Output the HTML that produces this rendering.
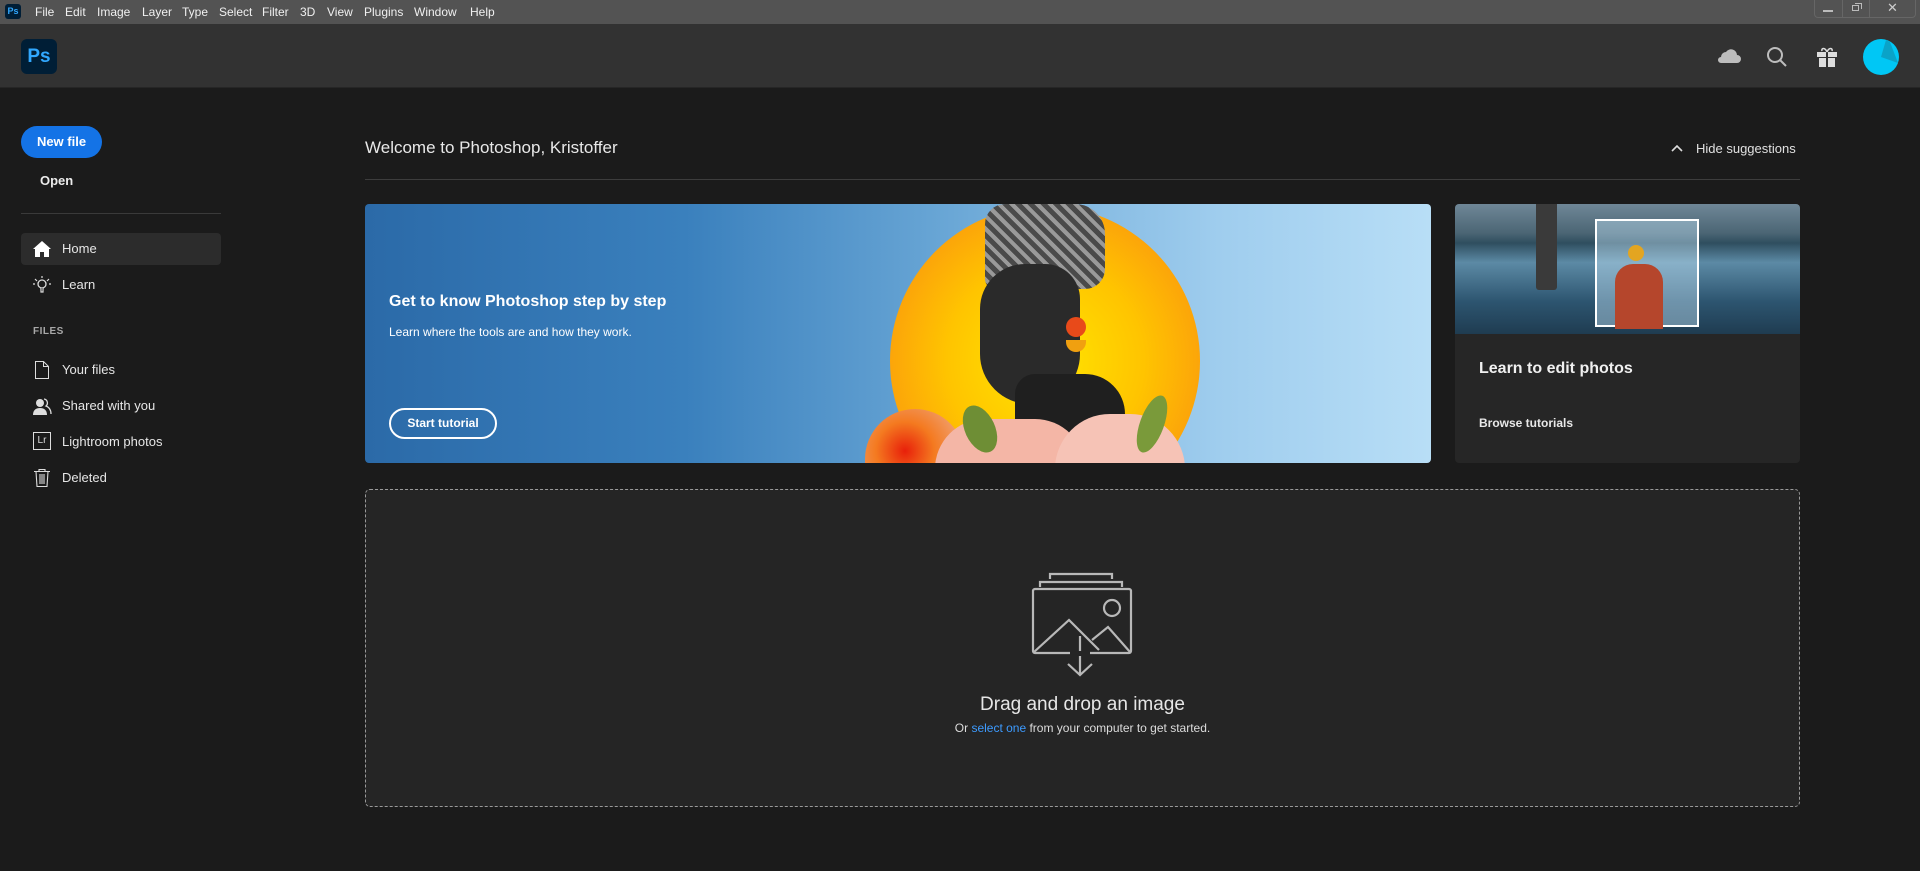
<!DOCTYPE html>
<html><head><meta charset="utf-8"><style>
*{margin:0;padding:0;box-sizing:border-box}
body{width:1920px;height:871px;background:#1b1b1b;font-family:"Liberation Sans",sans-serif;color:#e8e8e8;position:relative;overflow:hidden}
.a{position:absolute}
.menu{left:0;top:0;width:1920px;height:24px;background:#535353;font-size:12px;color:#f0f0f0}
.menu span{position:absolute;top:5px}
.hdr{left:0;top:24px;width:1920px;height:64px;background:#323232;border-bottom:1px solid #262626}
.nav{font-size:13px;color:#e6e6e6}
</style></head><body>
<div class="a menu">
 <div class="a" style="left:5px;top:4px;width:16px;height:15px;background:#001e36;border-radius:3px;color:#31a8ff;font-size:9px;font-weight:bold;text-align:center;line-height:15px">Ps</div>
 <span style="left:35px">File</span><span style="left:65px">Edit</span><span style="left:97px">Image</span><span style="left:142px">Layer</span><span style="left:182px">Type</span><span style="left:219px">Select</span><span style="left:262px">Filter</span><span style="left:300px">3D</span><span style="left:327px">View</span><span style="left:364px">Plugins</span><span style="left:414px">Window</span><span style="left:470px">Help</span>
 <div class="a" style="left:1814px;top:0;width:102px;height:18px;border:1px solid #666;border-top:none;border-radius:0 0 4px 4px"></div>
 <div class="a" style="left:1842px;top:0;width:1px;height:18px;background:#666"></div>
 <div class="a" style="left:1869px;top:0;width:1px;height:18px;background:#666"></div>
 <div class="a" style="left:1823px;top:10px;width:10px;height:2px;background:#bbb"></div>
 <div class="a" style="left:1852px;top:5px;width:7px;height:6px;border:1px solid #bbb"></div>
 <div class="a" style="left:1855px;top:3px;width:7px;height:6px;border-top:1px solid #bbb;border-right:1px solid #bbb"></div>
 <div class="a" style="left:1887px;top:0px;font-size:13px;color:#ccc">✕</div>
</div>
<div class="a hdr">
 <div class="a" style="left:21px;top:15px;width:36px;height:35px;background:#001e36;border-radius:6px;color:#31a8ff;font-weight:bold;font-size:19px;text-align:center;line-height:35px">Ps</div>
 <svg class="a" style="left:1716px;top:22px" width="26" height="18" viewBox="0 0 26 18"><path d="M5 17h16a4 4 0 0 0 0-8 6 6 0 0 0-11-3 5 5 0 0 0-5 5 3 3 0 0 0 0 6z" fill="#bdbdbd"/></svg>
 <svg class="a" style="left:1766px;top:22px" width="22" height="22"><circle cx="9" cy="9" r="7" fill="none" stroke="#bdbdbd" stroke-width="2"/><path d="M14 14l6 6" stroke="#bdbdbd" stroke-width="2"/></svg>
 <svg class="a" style="left:1816px;top:22px" width="22" height="22"><rect x="1" y="6" width="20" height="5" fill="#ddd"/><rect x="3" y="12" width="16" height="9" fill="#ddd"/><rect x="10" y="6" width="2" height="15" fill="#323232"/><path d="M11 6c-2-5-6-4-5-1M11 6c2-5 6-4 5-1" stroke="#ddd" stroke-width="1.5" fill="none"/></svg>
 <svg class="a" style="left:1863px;top:15px" width="36" height="36"><circle cx="18" cy="18" r="18" fill="#00c7f5"/><path d="M18 18 L23 1 L27 3 L35 24 Z" fill="#0aa3c8"/></svg>
</div>
<div class="a" style="left:21px;top:126px;width:81px;height:32px;background:#1473e6;border-radius:16px;color:#fff;font-weight:bold;font-size:13px;text-align:center;line-height:32px">New file</div>
<div class="a" style="left:40px;top:173px;font-weight:bold;font-size:13px;color:#ececec">Open</div>
<div class="a" style="left:21px;top:213px;width:200px;height:1px;background:#3a3a3a"></div>
<div class="a" style="left:21px;top:233px;width:200px;height:32px;background:#2c2c2c;border-radius:4px"></div>
<svg class="a" style="left:33px;top:241px" width="18" height="16"><path d="M9 0L0 8h2v8h5v-5h4v5h5V8h2z" fill="#fff"/></svg>
<div class="a nav" style="left:62px;top:241px">Home</div>
<svg class="a" style="left:33px;top:276px" width="18" height="18"><circle cx="9" cy="8" r="4" fill="none" stroke="#ddd" stroke-width="1.3"/><path d="M8 12v4h2v-4M9 0v2M2 3l2 2M16 3l-2 2M0 8h2M16 8h2" stroke="#ddd" stroke-width="1.2"/></svg>
<div class="a nav" style="left:62px;top:277px">Learn</div>
<div class="a" style="left:33px;top:326px;font-size:10px;font-weight:bold;color:#a8a8a8;letter-spacing:.5px">FILES</div>
<svg class="a" style="left:35px;top:361px" width="14" height="18"><path d="M.5.5h8l5 5v12H.5z M8.5.5v5h5" fill="none" stroke="#ddd"/></svg>
<div class="a nav" style="left:62px;top:362px">Your files</div>
<svg class="a" style="left:33px;top:398px" width="19" height="17"><circle cx="7" cy="5" r="4" fill="#ddd"/><path d="M0 17c0-5 3-7 7-7s7 2 7 7z" fill="#ddd"/><path d="M11 1a4 4 0 0 1 2 7c3 1 5 4 5 8" fill="none" stroke="#ddd" stroke-width="1.3"/></svg>
<div class="a nav" style="left:62px;top:398px">Shared with you</div>
<div class="a" style="left:33px;top:432px;width:18px;height:18px;border:1px solid #ddd;font-size:10px;color:#ddd;text-align:center;line-height:16px">Lr</div>
<div class="a nav" style="left:62px;top:434px">Lightroom photos</div>
<svg class="a" style="left:34px;top:469px" width="16" height="18"><path d="M0 2.5h16M5 2.5V.5h6v2M2 2.5l1 15h10l1-15M6 5v10M8 5v10M10 5v10" fill="none" stroke="#ddd" stroke-width="1.1"/></svg>
<div class="a nav" style="left:62px;top:470px">Deleted</div>
<div class="a" style="left:365px;top:138px;font-size:17px;color:#e8e8e8">Welcome to Photoshop, Kristoffer</div>
<svg class="a" style="left:1671px;top:144px" width="12" height="8"><path d="M1 7l5-5 5 5" fill="none" stroke="#ddd" stroke-width="1.6"/></svg>
<div class="a" style="left:1696px;top:141px;font-size:13px;color:#e0e0e0">Hide suggestions</div>
<div class="a" style="left:365px;top:179px;width:1435px;height:1px;background:#3d3d3d"></div>
<div class="a" style="left:365px;top:204px;width:1066px;height:259px;border-radius:4px;overflow:hidden;background:linear-gradient(90deg,#2b6aa8 0%,#3a80bd 30%,#6aa7d6 55%,#9fcdee 80%,#b8def6 100%)">
 <div class="a" style="left:525px;top:2px;width:310px;height:310px;border-radius:50%;background:radial-gradient(circle,#ffe600 0%,#ffc400 45%,#fb9a0d 80%,#f58a0c 100%)"></div>
 <div class="a" style="left:620px;top:0;width:120px;height:85px;background:repeating-linear-gradient(45deg,#4a4a4a 0 5px,#9a9a9a 5px 9px);border-radius:20px 30px 20px 10px"></div>
 <div class="a" style="left:615px;top:60px;width:100px;height:140px;background:#2a2a2a;border-radius:45px 35px 50px 50px"></div>
 <div class="a" style="left:650px;top:170px;width:110px;height:90px;background:#1f1f1f;border-radius:20px 40px 0 0"></div>
 <div class="a" style="left:701px;top:113px;width:20px;height:20px;border-radius:50%;background:#e84a1a"></div>
 <div class="a" style="left:701px;top:136px;width:20px;height:12px;border-radius:0 0 10px 10px;background:#f0a010"></div>
 <div class="a" style="left:500px;top:205px;width:100px;height:60px;border-radius:50px 50px 0 0;background:radial-gradient(circle at 40% 70%,#e8200a 0%,#f47a20 40%,#f0a070 80%)"></div>
 <div class="a" style="left:570px;top:215px;width:150px;height:50px;border-radius:60px 60px 0 0;background:#f4b6a6"></div>
 <div class="a" style="left:690px;top:210px;width:130px;height:55px;border-radius:60px 60px 0 0;background:#f6c3b6"></div>
 <div class="a" style="left:600px;top:200px;width:30px;height:50px;border-radius:50%;background:#6e8e35;transform:rotate(-25deg)"></div>
 <div class="a" style="left:775px;top:190px;width:24px;height:60px;border-radius:50%;background:#7a9a3a;transform:rotate(20deg)"></div>
 <div class="a" style="left:24px;top:89px;font-size:16px;font-weight:bold;color:#fff">Get to know Photoshop step by step</div>
 <div class="a" style="left:24px;top:121px;font-size:12px;color:#fff">Learn where the tools are and how they work.</div>
 <div class="a" style="left:24px;top:204px;width:108px;height:31px;border:2px solid #fff;border-radius:16px;color:#fff;font-size:12px;font-weight:bold;text-align:center;line-height:27px">Start tutorial</div>
</div>
<div class="a" style="left:1455px;top:204px;width:345px;height:259px;background:#262626;border-radius:4px;overflow:hidden">
 <div class="a" style="left:0;top:0;width:345px;height:130px;background:linear-gradient(180deg,#6f8797 0%,#4c6675 22%,#2f4e5f 30%,#5c8aa5 45%,#2d5570 75%,#1f3c51 100%)"></div>
 <div class="a" style="left:140px;top:15px;width:104px;height:108px;background:rgba(190,225,245,.45);border:2px solid #fff"></div>
 <div class="a" style="left:160px;top:60px;width:48px;height:65px;background:#b5462c;border-radius:18px 18px 0 0"></div>
 <div class="a" style="left:173px;top:41px;width:16px;height:16px;border-radius:50%;background:#e3a521"></div>
 <div class="a" style="left:81px;top:0;width:21px;height:86px;background:#3a3a3a;border-radius:0 0 3px 3px"></div>
 <div class="a" style="left:24px;top:156px;font-size:16px;font-weight:bold;color:#f0f0f0">Learn to edit photos</div>
 <div class="a" style="left:24px;top:212px;font-size:12px;font-weight:bold;color:#e8e8e8">Browse tutorials</div>
</div>
<div class="a" style="left:365px;top:489px;width:1435px;height:318px;border:1px dashed #9a9a9a;border-radius:5px;background:#252525"></div>
<svg class="a" style="left:1030px;top:570px" width="104" height="108" viewBox="0 0 104 108"><g fill="none" stroke="#b8b8b8" stroke-width="2.2"><path d="M20 9V4h62v5M10 17v-5h82v5"/><rect x="3" y="19" width="98" height="64" rx="2"/><circle cx="82" cy="38" r="8"/><path d="M4 82l35-32 30 30M62 70l16-13 22 25"/><path d="M50 66v38M38 94l12 11 12-11"/></g><rect x="40" y="81" width="20" height="5" fill="#252525"/></svg>
<div class="a" style="left:365px;top:694px;width:1435px;text-align:center;font-size:19px;color:#e6e6e6">Drag and drop an image</div>
<div class="a" style="left:365px;top:721px;width:1435px;text-align:center;font-size:12px;color:#dcdcdc">Or <span style="color:#3d9bff">select one</span> from your computer to get started.</div>
</body></html>
